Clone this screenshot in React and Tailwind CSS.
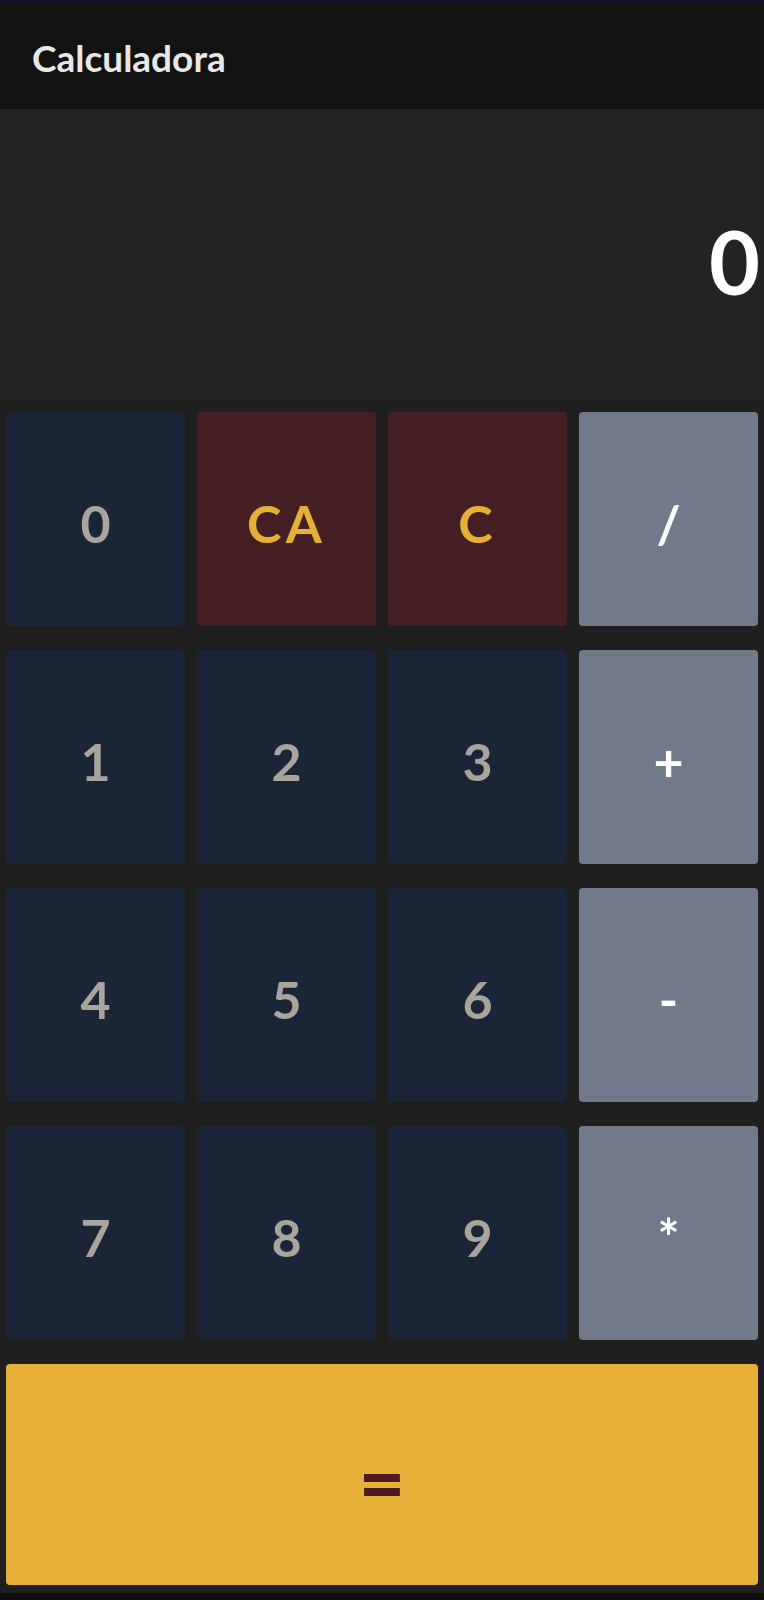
import React, { useState } from 'react';

const keys = [
  { label: '0', kind: 'num' },
  { label: 'CA', kind: 'clear' },
  { label: 'C', kind: 'clear' },
  { label: '/', kind: 'op' },
  { label: '1', kind: 'num' },
  { label: '2', kind: 'num' },
  { label: '3', kind: 'num' },
  { label: '+', kind: 'op' },
  { label: '4', kind: 'num' },
  { label: '5', kind: 'num' },
  { label: '6', kind: 'num' },
  { label: '-', kind: 'op' },
  { label: '7', kind: 'num' },
  { label: '8', kind: 'num' },
  { label: '9', kind: 'num' },
  { label: '*', kind: 'op' },
];

const styles = {
  num: 'bg-[#1b2538] text-[#a9a49d]',
  clear: 'bg-[#461f24] text-[#e6b034] tracking-[0.08em]',
  op: 'bg-[#717a8b] text-white',
};

const App = () => {
  const [display, setDisplay] = useState('0');

  const handlePress = (label) => {
    if (label === 'CA') return setDisplay('0');
    if (label === 'C') return setDisplay((d) => (d.length > 1 ? d.slice(0, -1) : '0'));
    setDisplay((d) => (d === '0' ? label : d + label));
  };

  const handleEquals = () => {
    try {
      // eslint-disable-next-line no-new-func
      const result = Function(`return (${display})`)();
      setDisplay(String(result));
    } catch (e) {
      setDisplay('0');
    }
  };

  return (
    <div className="w-[764px] h-[1600px] bg-[#1f1f1f] flex flex-col overflow-hidden" style={{ fontFamily: 'Lato, "Noto Sans", sans-serif' }}>
      {/* Header */}
      <div className="h-[109px] shrink-0 bg-[#121212] border-t-2 border-[#1c0b3a] flex items-center px-8">
        <h1 className="text-[37px] font-bold text-[#e8e8e8] leading-none mt-1">Calculadora</h1>
      </div>

      {/* Display */}
      <div className="h-[292px] shrink-0 bg-[#242323] flex items-center justify-end overflow-hidden pr-1">
        <span className="text-[88px] font-bold text-white leading-none mt-3">{display}</span>
      </div>

      {/* Keypad */}
      <div className="grid grid-cols-4 gap-x-3 gap-y-6 px-1.5 pt-[11px]">
        {keys.map((k) => (
          <button
            key={k.label}
            onClick={() => handlePress(k.label)}
            className={`h-[214px] rounded flex items-center justify-center text-[52px] font-bold ${styles[k.kind]}`}
          >
            <span className="mt-2">{k.label}</span>
          </button>
        ))}
      </div>

      <div className="px-1.5 pt-6">
        <button
          onClick={handleEquals}
          className="w-full h-[221px] rounded bg-[#e6af37] text-[#4a1a20] flex items-center justify-center text-[80px] font-black"
        >
          <span className="mt-3">=</span>
        </button>
      </div>

      <div className="mt-auto h-[7px] bg-[#0f0f0f]"></div>
    </div>
  );
};

export default App;
